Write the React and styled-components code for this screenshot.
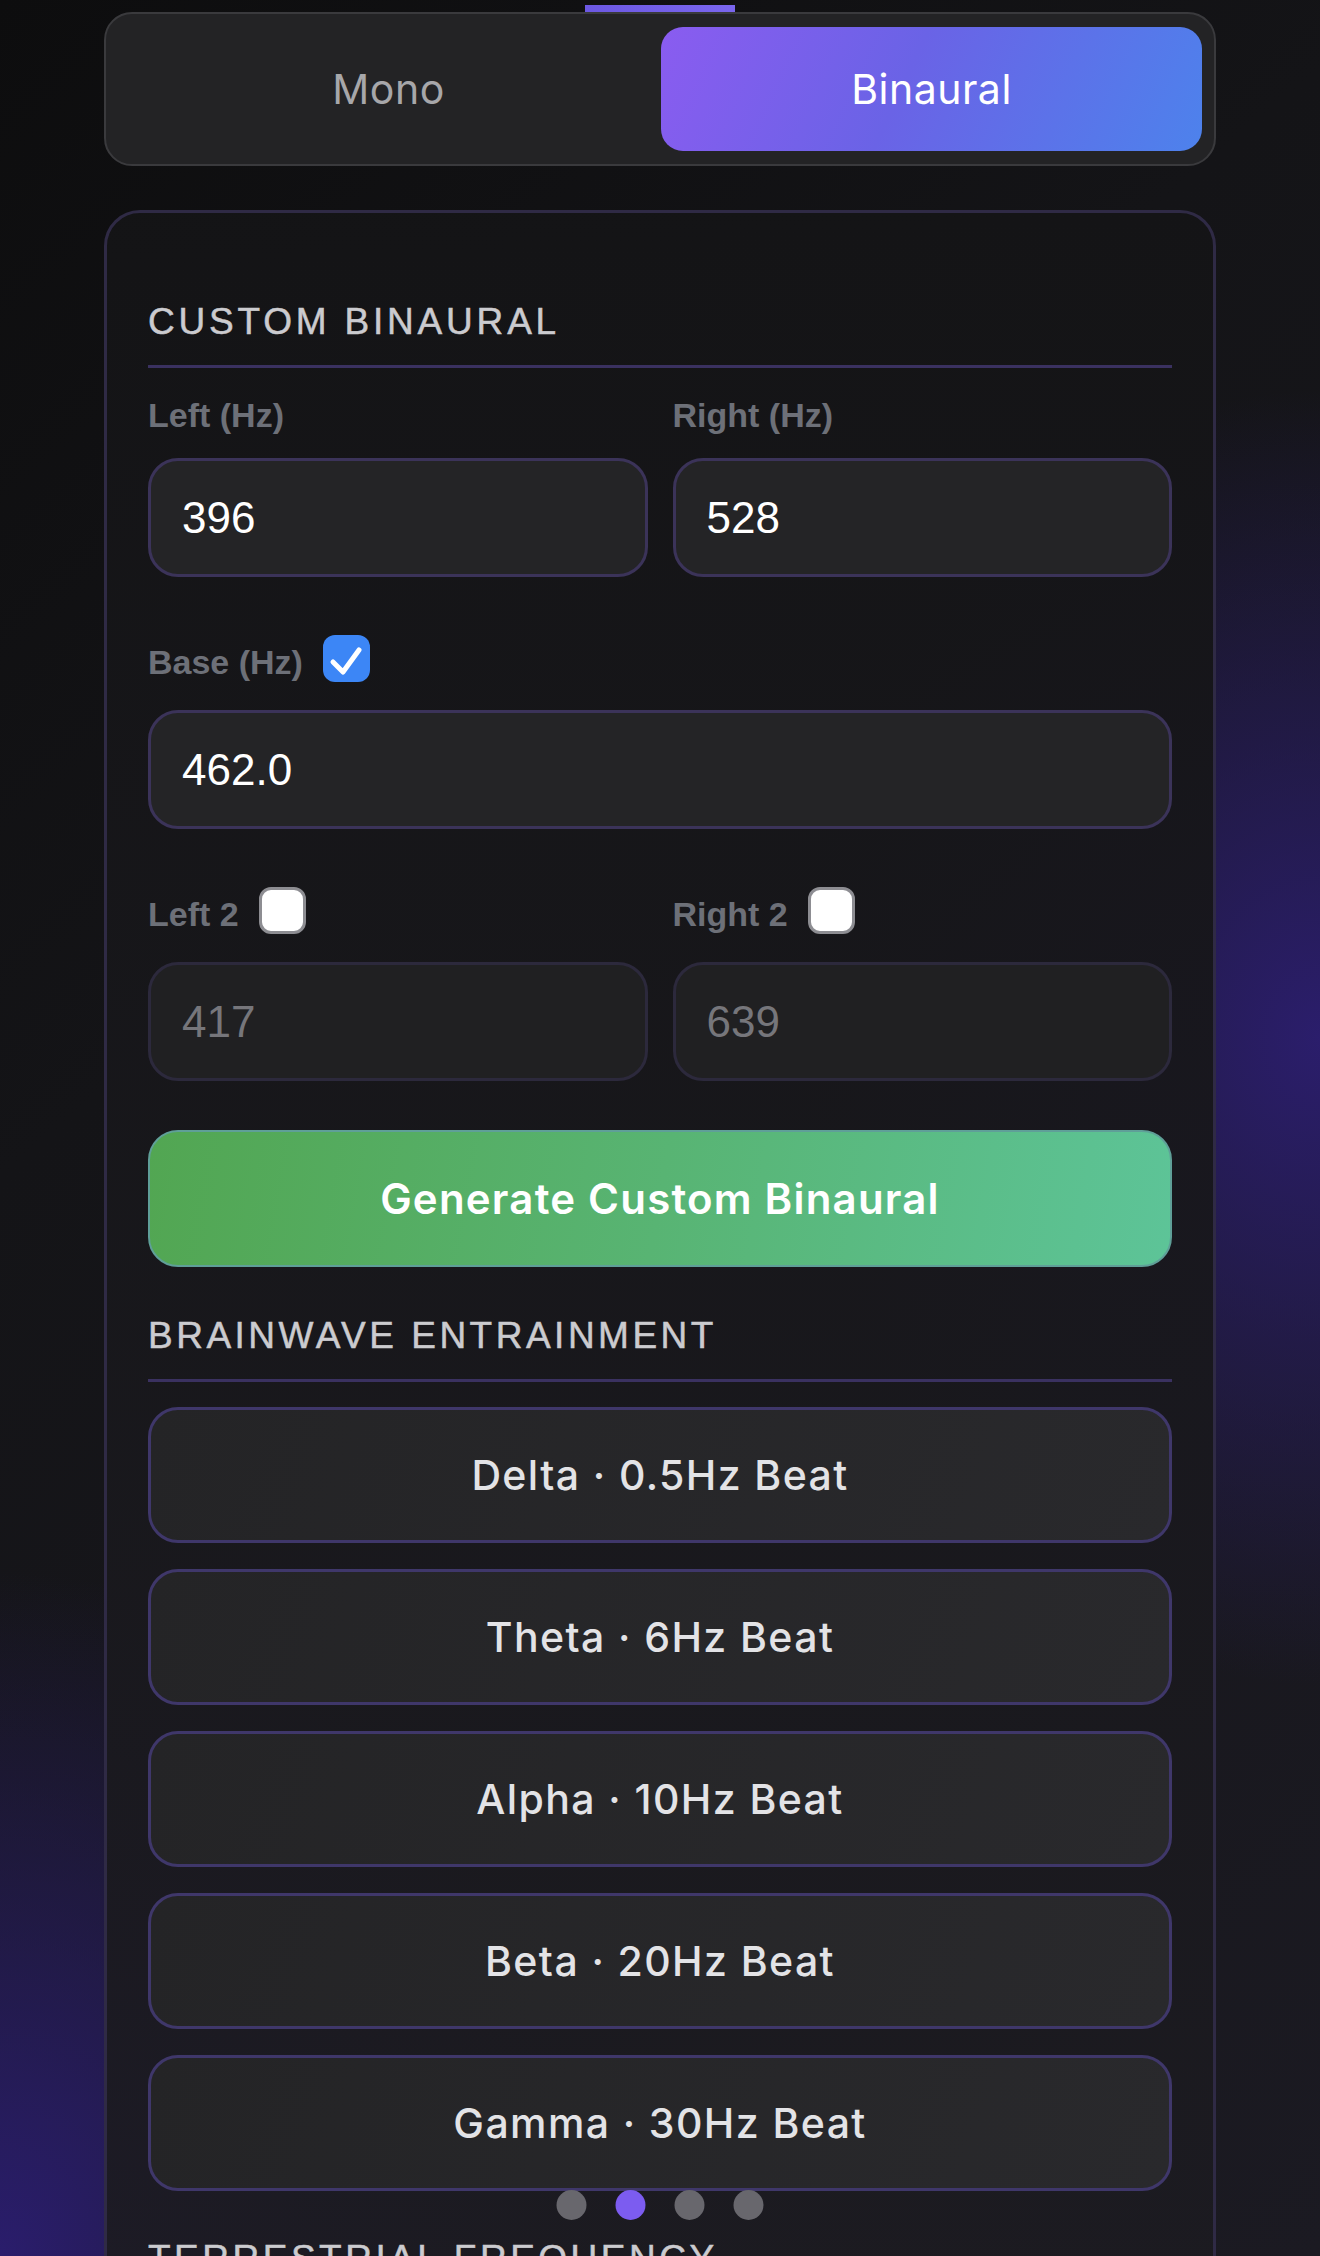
import React from "react";
import styled, { createGlobalStyle } from "styled-components";

const GlobalStyle = createGlobalStyle`
  html, body {
    margin: 0;
    padding: 0;
    background: #121214;
  }
  * {
    box-sizing: border-box;
  }
`;

const Page = styled.div`
  position: relative;
  height: 2256px;
  overflow: hidden;
  padding: 5px 104px 0;
  font-family: "Liberation Sans", Arial, sans-serif;
  background:
    radial-gradient(ellipse 720px 900px at 100% 46%, rgba(44, 30, 112, 0.95), rgba(44, 30, 112, 0) 72%),
    radial-gradient(ellipse 820px 950px at 0% 100%, rgba(42, 29, 108, 1), rgba(42, 29, 108, 0) 72%),
    linear-gradient(140deg, #0d0d0e 0%, #141417 35%, #1b1a22 100%);
`;

const Handle = styled.div`
  width: 150px;
  height: 7px;
  margin: 0 auto;
  background: linear-gradient(90deg, #6c58e2, #7a66ee);
`;

const Toggle = styled.div`
  display: grid;
  grid-template-columns: 1fr 1fr;
  gap: 2px;
  height: 154px;
  padding: 13px 12px;
  background: #232325;
  border: 2px solid #3a3a3d;
  border-radius: 28px;
`;

const Tab = styled.div`
  display: flex;
  align-items: center;
  justify-content: center;
  border-radius: 22px;
  font-family: Inter, "Noto Sans", sans-serif;
  font-size: 41px;
  font-weight: 400;
  letter-spacing: 0.5px;
  color: ${(p) => (p.active ? "#ffffff" : "#a7a7aa")};
  background: ${(p) =>
    p.active ? "linear-gradient(115deg, #8a5cf0 0%, #6a63e6 45%, #4d82ec 100%)" : "transparent"};
`;

const Card = styled.div`
  margin-top: 44px;
  padding: 90px 41px 0;
  min-height: 2100px;
  background: linear-gradient(180deg, rgba(20, 20, 22, 0.96) 0%, rgba(28, 27, 33, 0.93) 100%);
  border: 3px solid #2f2a45;
  border-radius: 36px;
`;

const SectionTitle = styled.h2`
  margin: ${(p) => p.top || 0}px 0 0;
  padding-bottom: 25px;
  border-bottom: 3px solid #3a3160;
  font-size: 37px;
  line-height: 1;
  font-weight: 400;
  letter-spacing: ${(p) => p.spacing || 3.7}px;
  color: #cbcbcf;
  -webkit-text-stroke: 0.5px #cbcbcf;
`;

const FieldRow = styled.div`
  display: grid;
  grid-template-columns: ${(p) => (p.single ? "1fr" : "1fr 1fr")};
  gap: 25px;
  margin-top: ${(p) => p.top}px;
`;

const Field = styled.div`
  display: flex;
  flex-direction: column;
`;

const LabelRow = styled.div`
  display: flex;
  align-items: flex-end;
  gap: 20px;
  height: ${(p) => (p.withBox ? 47 : 34)}px;
  margin-bottom: ${(p) => (p.withBox ? 28 : 26)}px;
`;

const Label = styled.span`
  font-size: 34px;
  line-height: 1;
  font-weight: 700;
  color: #6d7078;
  margin-bottom: ${(p) => (p.boxed ? 3 : 0)}px;
`;

const Box = styled.span`
  display: inline-flex;
  align-items: center;
  justify-content: center;
  width: 47px;
  height: 47px;
  border-radius: 12px;
  background: ${(p) => (p.checked ? "#3c86f6" : "#ffffff")};
  border: ${(p) => (p.checked ? "none" : "3px solid #8d8d92")};
`;

const Input = styled.div`
  display: flex;
  align-items: center;
  height: 119px;
  padding-left: 31px;
  border-radius: 30px;
  border: 3px solid ${(p) => (p.disabled ? "#2c293c" : "#3b3359")};
  background: ${(p) => (p.disabled ? "#202022" : "#242426")};
  font-size: 44px;
  color: ${(p) => (p.disabled ? "#76767b" : "#ffffff")};
`;

const GenerateButton = styled.div`
  display: flex;
  align-items: center;
  justify-content: center;
  height: 137px;
  margin-top: 49px;
  border-radius: 30px;
  border: 2px solid #5f9f98;
  background: linear-gradient(100deg, #52a652 0%, #58b473 50%, #5dc498 100%);
  font-family: Inter, "Noto Sans", sans-serif;
  font-size: 42px;
  font-weight: 600;
  letter-spacing: 1.2px;
  color: #ffffff;
`;

const WaveList = styled.div`
  display: flex;
  flex-direction: column;
  gap: 26px;
  margin-top: 25px;
`;

const WaveButton = styled.div`
  display: flex;
  align-items: center;
  justify-content: center;
  height: 136px;
  border-radius: 30px;
  border: 3px solid #3f376a;
  background: linear-gradient(110deg, #242426 0%, #29292c 100%);
  font-family: Inter, "Noto Sans", sans-serif;
  font-size: 41px;
  font-weight: 500;
  letter-spacing: 1.4px;
  color: #e3e3e6;
`;

const Dots = styled.div`
  position: absolute;
  top: 2190px;
  left: 50%;
  transform: translateX(-50%);
  display: flex;
  gap: 29px;
`;

const Dot = styled.span`
  width: 30px;
  height: 30px;
  border-radius: 50%;
  background: ${(p) => (p.active ? "#7c5cf0" : "#68676d")};
`;

const Check = () => (
  <svg width="47" height="47" viewBox="0 0 47 47">
    <path
      d="M10 27 L20 37 L36 15"
      fill="none"
      stroke="#ffffff"
      strokeWidth="5"
      strokeLinecap="round"
      strokeLinejoin="round"
    />
  </svg>
);

const waves = [
  "Delta · 0.5Hz Beat",
  "Theta · 6Hz Beat",
  "Alpha · 10Hz Beat",
  "Beta · 20Hz Beat",
  "Gamma · 30Hz Beat",
];

const App = () => {
  return (
    <Page>
      <GlobalStyle />
      <Handle />
      <Toggle>
        <Tab>Mono</Tab>
        <Tab active>Binaural</Tab>
      </Toggle>

      <Card>
        <SectionTitle spacing={3.8}>CUSTOM BINAURAL</SectionTitle>

        <FieldRow top={30}>
          <Field>
            <LabelRow>
              <Label>Left (Hz)</Label>
            </LabelRow>
            <Input>396</Input>
          </Field>
          <Field>
            <LabelRow>
              <Label>Right (Hz)</Label>
            </LabelRow>
            <Input>528</Input>
          </Field>
        </FieldRow>

        <FieldRow single top={58}>
          <Field>
            <LabelRow withBox>
              <Label boxed>Base (Hz)</Label>
              <Box checked>
                <Check />
              </Box>
            </LabelRow>
            <Input>462.0</Input>
          </Field>
        </FieldRow>

        <FieldRow top={58}>
          <Field>
            <LabelRow withBox>
              <Label boxed>Left 2</Label>
              <Box />
            </LabelRow>
            <Input disabled>417</Input>
          </Field>
          <Field>
            <LabelRow withBox>
              <Label boxed>Right 2</Label>
              <Box />
            </LabelRow>
            <Input disabled>639</Input>
          </Field>
        </FieldRow>

        <GenerateButton>Generate Custom Binaural</GenerateButton>

        <SectionTitle top={50} spacing={3.5}>BRAINWAVE ENTRAINMENT</SectionTitle>
        <WaveList>
          {waves.map((w) => (
            <WaveButton key={w}>{w}</WaveButton>
          ))}
        </WaveList>

        <SectionTitle top={49} spacing={3.5}>TERRESTRIAL FREQUENCY</SectionTitle>
      </Card>

      <Dots>
        <Dot />
        <Dot active />
        <Dot />
        <Dot />
      </Dots>
    </Page>
  );
};

export default App;
